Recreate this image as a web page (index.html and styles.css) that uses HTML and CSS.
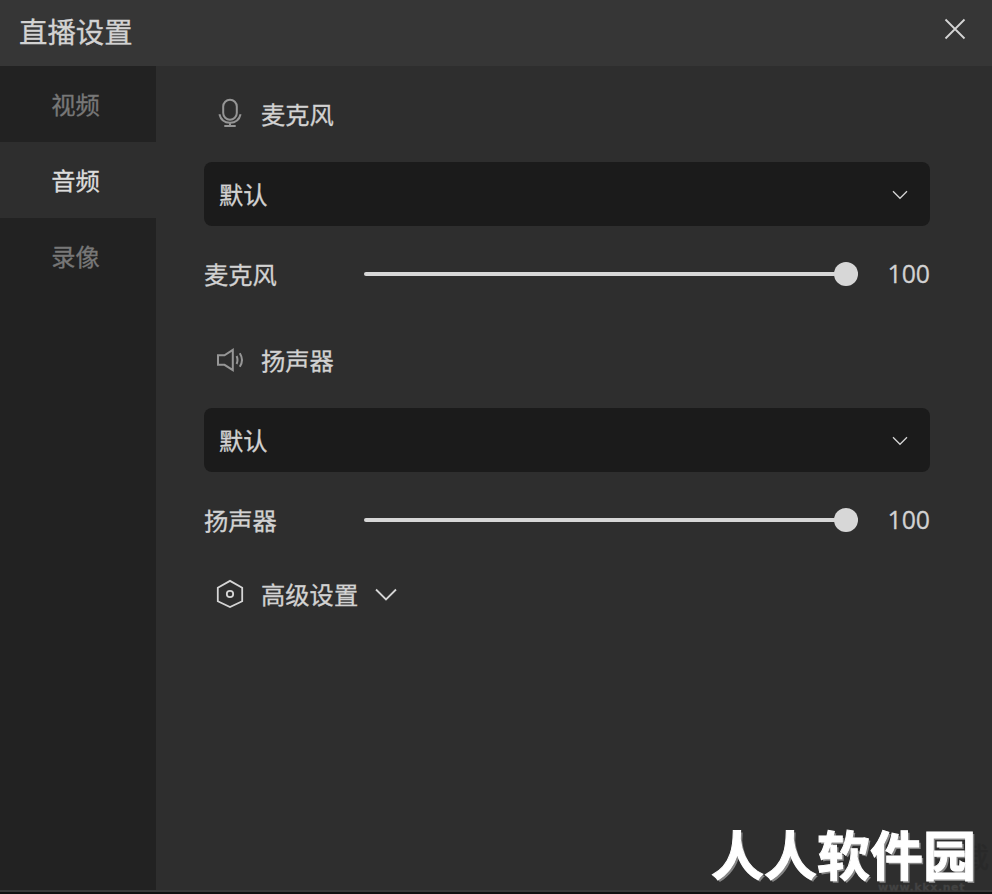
FILE: index.html
```html
<!DOCTYPE html>
<html lang="zh-CN">
<head>
<meta charset="utf-8">
<title>直播设置</title>
<link rel="stylesheet" href="styles.css">
</head>
<body>
<div class="window">
  <header class="titlebar">
    <h1>直播设置</h1>
    <svg class="close" width="22" height="22" viewBox="0 0 22 22"><path d="M1.5 1.5 20.5 20.5M20.5 1.5 1.5 20.5"/></svg>
  </header>
  <div class="body">
    <nav class="sidebar">
      <a class="tab">视频</a>
      <a class="tab active">音频</a>
      <a class="tab">录像</a>
    </nav>
    <main class="content">
      <section class="group">
        <h2 class="heading">
          <svg class="icon dim" width="28" height="32" viewBox="0 0 28 32"><rect x="7.2" y="1.8" width="13.6" height="20" rx="6.8"/><path d="M3.4 16.2C4.8 22 8.7 24.7 14 24.7S23.2 22 24.6 16.2M14 24.7V28M8.3 28H19.7"/></svg>
          <span>麦克风</span>
        </h2>
        <div class="select"><span>默认</span><svg class="caret" width="16" height="10" viewBox="0 0 16 10"><path d="M1 1.3 8 8.3 15 1.3"/></svg></div>
        <div class="volume"><span class="label">麦克风</span><div class="track"><i class="thumb"></i></div><span class="value">100</span></div>
      </section>
      <section class="group">
        <h2 class="heading">
          <svg class="icon dim" width="28" height="32" viewBox="0 0 28 32"><path d="M2 11.3H8.5L16.8 5.8V26.2L8.5 20.8H2ZM20.6 12Q22.4 16 20.6 20M23.8 9.2Q28.2 16 23.8 22.8"/></svg>
          <span>扬声器</span>
        </h2>
        <div class="select"><span>默认</span><svg class="caret" width="16" height="10" viewBox="0 0 16 10"><path d="M1 1.3 8 8.3 15 1.3"/></svg></div>
        <div class="volume"><span class="label">扬声器</span><div class="track"><i class="thumb"></i></div><span class="value">100</span></div>
      </section>
      <h2 class="heading advanced">
        <svg class="icon" width="28" height="32" viewBox="0 0 28 32"><path d="M14 2.9 26.2 9.7V23.3L14 29.1 1.8 23.3V9.7Z"/><circle cx="14" cy="16" r="3.2"/></svg>
        <span>高级设置</span>
        <svg class="more" width="22" height="13" viewBox="0 0 22 13"><path d="M1 1.5 11 11.5 21 1.5"/></svg>
      </h2>
    </main>
  </div>
  <div class="site">www.kkx.net</div>
  <div class="ghost">载</div>
  <div class="brand">人人软件园</div>
</div>
</body>
</html>
```
FILE: styles.css
```css
* { box-sizing: border-box; }

body {
  margin: 0;
  background: #111;
  color: #d2d2d2;
  font: 24.3px/32px "Noto Sans CJK SC", sans-serif;
  -webkit-text-stroke: 0.3px currentColor;
}

.window {
  position: relative;
  display: flex;
  flex-direction: column;
  height: 894px;
  overflow: hidden;
  border-bottom: 2px solid #111;
}

.titlebar {
  display: flex;
  justify-content: space-between;
  height: 66px;
  padding: 12px 26px 0 19px;
  background: #363636;
}

h1, h2 { margin: 0; font-weight: 400; }
h1 { font-size: 28.4px; line-height: 38px; }

svg {
  display: block;
  fill: none;
  stroke: #d5d5d5;
  stroke-width: 1.8;
}

.close { margin-top: 6px; }

.body {
  display: flex;
  flex: 1;
  border-bottom: 2px solid #3a3a3a;
}

.sidebar { width: 156px; background: #222; }

.tab {
  display: block;
  height: 76px;
  padding-right: 5px;
  line-height: 75px;
  text-align: center;
  color: #777;
}

.tab.active { background: #2e2e2e; color: #dcdcdc; }

.content {
  flex: 1;
  padding: 32px 62px 0 48px;
  background: #2e2e2e;
}

.group { height: 246px; }

.heading {
  display: flex;
  align-items: center;
  gap: 17px;
  height: 32px;
  padding-left: 12px;
  font-size: 24.3px;
}

.dim { stroke: #969696; stroke-width: 2; }

.select {
  display: flex;
  align-items: center;
  justify-content: space-between;
  height: 64px;
  margin-top: 32px;
  padding: 0 22px 0 15px;
  border-radius: 8px;
  background: #1b1b1b;
}

.caret { margin-top: 2px; stroke-width: 1.3; }

.volume {
  display: flex;
  align-items: center;
  height: 32px;
  margin-top: 32px;
}

.label { width: 160px; }

.track {
  position: relative;
  width: 494px;
  height: 4px;
  border-radius: 2px;
  background: #d7d7d7;
}

.thumb {
  position: absolute;
  top: -10px;
  right: 0;
  width: 24px;
  height: 24px;
  border-radius: 50%;
  background: #d7d7d7;
}

.value {
  flex: 1;
  margin-bottom: 2px;
  text-align: right;
  font-family: "Open Sans", sans-serif;
  font-size: 24.8px;
}

.advanced { margin-top: -12px; }
.advanced .icon { margin-top: -1px; }

.brand, .site, .ghost { position: absolute; white-space: nowrap; }

.brand {
  left: 711px;
  top: 815px;
  font-size: 53px;
  line-height: 76px;
  font-weight: 700;
  color: #fff;
  -webkit-text-stroke: 1px #fff;
  text-shadow: 2px 2px 0 #858585;
}

.site {
  left: 878px;
  top: 880px;
  font: 700 11px/16px "DejaVu Sans", sans-serif;
  letter-spacing: 0.6px;
  color: #424242;
}

.ghost {
  left: 961px;
  top: 834px;
  font-size: 28px;
  line-height: 44px;
  color: #292929;
}
```
